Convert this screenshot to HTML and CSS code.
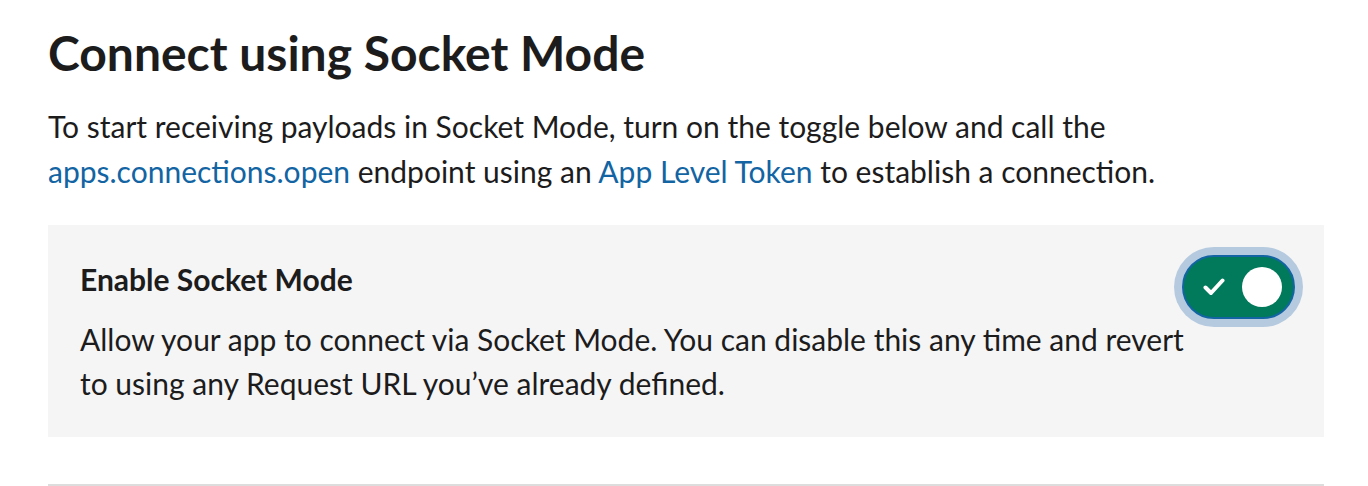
FILE: index.html
```html
<!DOCTYPE html>
<html lang="en">
<head>
    <meta charset="UTF-8">
    <meta name="viewport" content="width=device-width, initial-scale=1.0">
    <title>Socket Mode</title>
    <link rel="stylesheet" href="styles.css">
</head>
<body>
    <section class="section">
        <h1>Connect using Socket Mode</h1>
        <p class="intro">
            To start receiving payloads in Socket Mode, turn on the toggle below and call the
            <a href="#">apps.connections.open</a> endpoint using an <a href="#">App Level Token</a> to establish a connection.
        </p>
        <div class="setting-card">
            <div class="setting-text">
                <h3>Enable Socket Mode</h3>
                <p>Allow your app to connect via Socket Mode. You can disable this any time and revert to using any Request URL you’ve already defined.</p>
            </div>
            <button class="toggle is-on" type="button" aria-pressed="true">
                <svg class="toggle-check" width="22" height="18" viewBox="0 0 22 18" fill="none">
                    <path d="M2.5 9.5 L8 15 L19.5 2.5" stroke="#fff" stroke-width="4" stroke-linecap="round" stroke-linejoin="round"/>
                </svg>
                <span class="toggle-knob"></span>
            </button>
        </div>
        <hr class="divider">
    </section>
</body>
</html>
```

FILE: styles.css
```css
:root {
    --text-color: #1d1c1d;
    --link-color: #1264a3;
    --card-bg: #f5f5f5;
    --border-color: #dddddd;
    --green: #007a5a;
    --focus-ring: #b5cadf;
}

body {
    margin: 0;
    padding: 0;
    font-family: Lato, 'Noto Sans', sans-serif;
    color: var(--text-color);
    background-color: #ffffff;
}

.section {
    width: 1276px;
    margin-left: 48px;
    padding-top: 25px;
}

h1 {
    margin: 0;
    font-size: 48px;
    line-height: 56px;
    font-weight: 700;
}

.intro {
    margin: 23px 0 0;
    font-size: 30px;
    line-height: 45px;
}

.intro a {
    color: var(--link-color);
    text-decoration: none;
}

.setting-card {
    display: flex;
    align-items: flex-start;
    margin-top: 31px;
    padding: 32px 29px 32px 32px;
    background-color: var(--card-bg);
}

.setting-text {
    flex: 0 0 1106px;
}

.setting-text h3 {
    margin: 0;
    font-size: 30px;
    line-height: 44px;
    font-weight: 700;
}

.setting-text p {
    margin: 16px 0 0;
    font-size: 30px;
    line-height: 44px;
}

.toggle {
    display: flex;
    align-items: center;
    justify-content: space-between;
    flex-shrink: 0;
    box-sizing: border-box;
    width: 113px;
    height: 64px;
    margin: -2px 0 0 -4px;
    padding: 0 11px 0 19px;
    border: 2px solid var(--link-color);
    border-radius: 32px;
    background-color: var(--green);
    box-shadow: 0 0 0 8px var(--focus-ring);
    cursor: pointer;
}

.toggle-check {
    display: block;
}

.toggle-knob {
    width: 40px;
    height: 40px;
    border-radius: 50%;
    background-color: #ffffff;
}

.divider {
    margin: 47px 0 0;
    border: none;
    border-top: 2px solid var(--border-color);
}
```
